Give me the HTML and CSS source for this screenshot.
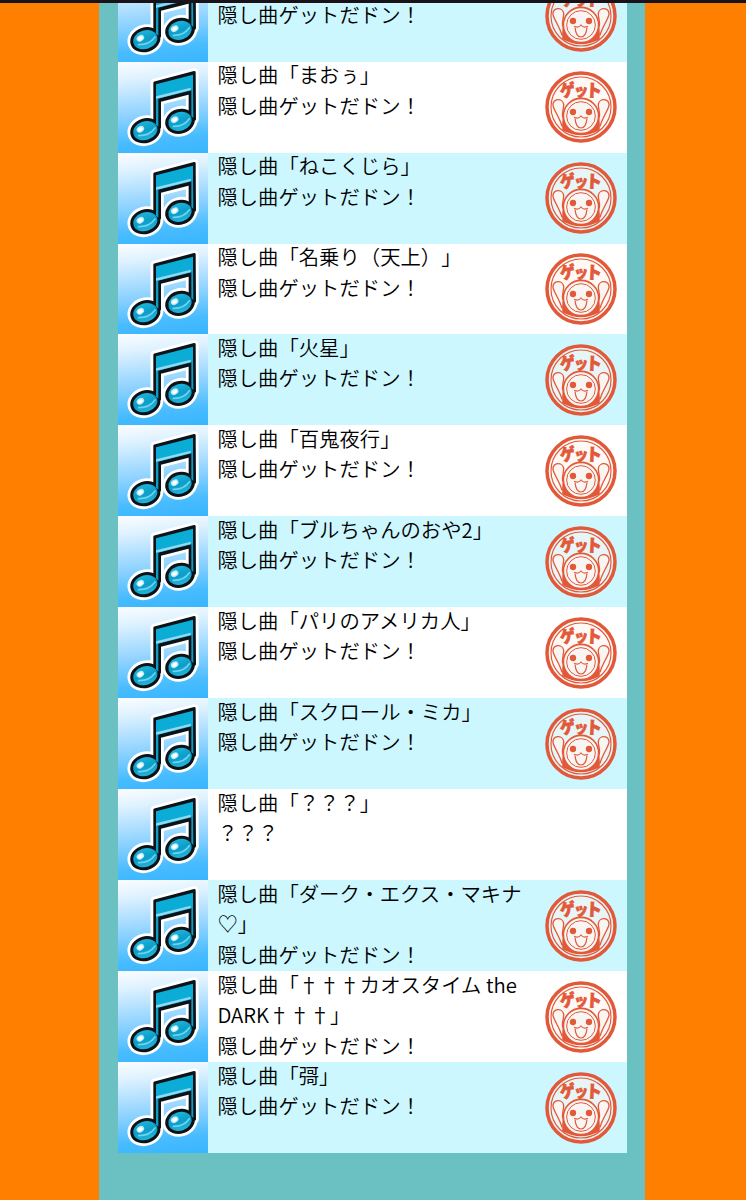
FILE: index.html
```
<!DOCTYPE html>
<html lang="ja">
<head>
  <meta charset="UTF-8" />
  <meta name="viewport" content="width=device-width, initial-scale=1.0"/>
  <title>ごほうび</title>
  <link rel="stylesheet" href="styles.css">
</head>
<body>
  <svg class="defs" width="0" height="0">
    <defs>
      <linearGradient id="noteFill" x1="0" y1="0" x2="0" y2="1">
        <stop offset="0" stop-color="#1cb4da"/>
        <stop offset="0.5" stop-color="#0c9dc8"/>
        <stop offset="1" stop-color="#22b5dc"/>
      </linearGradient>
      <g id="noteShape">
        <path d="M110 62 L229 31 L230 172 L216 172 L216 93 L125 116 L125 196 L110 196 Z"/>
        <ellipse cx="82" cy="206" rx="42" ry="33" transform="rotate(-18 82 206)"/>
        <ellipse cx="186" cy="178" rx="41" ry="33" transform="rotate(-18 186 178)"/>
      </g>
    </defs>
    <symbol id="note" viewBox="0 0 273 273">
      <use href="#noteShape" fill="#fff" stroke="#fff" stroke-width="25" stroke-linejoin="round"/>
      <use href="#noteShape" fill="#0b1218" stroke="#0b1218" stroke-width="8" stroke-linejoin="round"/>
      <path d="M114 67 L225 38 L225 84 L114 112 Z" fill="#0bacd6"/>
      <path d="M114 103 L218 77 L218 84 L114 111 Z" fill="#8fd9f1"/>
      <path d="M114 111 L121 109 L121 194 L114 188 Z M220 82 L225 81 L226 168 L220 162 Z" fill="#0d9dc5"/>
      <g fill="url(#noteFill)">
        <ellipse cx="82" cy="206" rx="37" ry="28" transform="rotate(-18 82 206)"/>
        <ellipse cx="186" cy="178" rx="36" ry="28" transform="rotate(-18 186 178)"/>
      </g>
      <g fill="none" stroke="#6fd2ee" stroke-width="5" stroke-linecap="round">
        <path d="M62 221 Q94 222 111 198"/>
        <path d="M166 193 Q198 194 214 170"/>
      </g>
      <g fill="#b5ebf9">
        <ellipse cx="67" cy="202" rx="12" ry="9" transform="rotate(-30 67 202)"/>
        <ellipse cx="170" cy="173" rx="12" ry="9" transform="rotate(-30 170 173)"/>
      </g>
      <g fill="#fff">
        <ellipse cx="67" cy="202" rx="8" ry="5.5" transform="rotate(-30 67 202)"/>
        <ellipse cx="170" cy="173" rx="8" ry="5.5" transform="rotate(-30 170 173)"/>
      </g>
    </symbol>
    <symbol id="stamp" viewBox="0 0 216 216">
      <circle cx="108" cy="108" r="102" fill="#fff4ef" fill-opacity="0.55" stroke="#e2593a" stroke-width="10.5"/>
      <circle cx="108" cy="108" r="90" fill="none" stroke="#e2593a" stroke-width="3.5"/>
      <path d="M50 132 L52 178 Q108 208 164 178 L166 132 Z" fill="#e2593a"/>
      <g fill="#f8f5f2" stroke="#e2593a" stroke-width="4">
        <path d="M51 166 C43 138 27 119 24 103 C22 82 53 80 56 100 C57 112 50 122 53 139"/>
        <path d="M165 166 C173 138 189 119 192 103 C194 82 163 80 160 100 C159 112 166 122 163 139"/>
        <circle cx="108" cy="135" r="53" stroke-width="5"/>
        <circle cx="108" cy="135" r="43" stroke-width="3"/>
      </g>
      <g fill="#e2593a">
        <circle cx="84" cy="123" r="9.5"/>
        <circle cx="132" cy="123" r="9.5"/>
      </g>
      <path d="M87 139 Q100 145 108 135 Q116 145 129 139 M90 142 Q93 171 108 171 Q123 171 126 142" fill="none" stroke="#e2593a" stroke-width="3.5"/>
      <g class="stamp-text">
        <text transform="translate(47 79) rotate(-6) scale(1.04 1.18)">ゲ</text>
        <text transform="translate(87 74) scale(1 1.1)">ッ</text>
        <text transform="translate(122 76) rotate(3) scale(1.1 1.18)">ト</text>
      </g>
    </symbol>
  </svg>

  <main class="panel">
    <ul class="rewards" id="rewards"></ul>
  </main>

  <script src="script.js"></script>
</body>
</html>
```
FILE: styles.css
```
* {
  box-sizing: border-box;
}

body {
  margin: 0;
  height: 1200px;
  overflow: hidden;
  background: #ff8000;
  border-top: 3px solid #1a1219;
  font-family: "Noto Sans CJK JP", sans-serif;
  font-weight: 400;
  color: #000;
}

.defs {
  display: block;
}

.panel {
  width: 545.5px;
  height: 1197px;
  margin-left: 99px;
  padding: 0 18px 0 19px;
  background: #6bc1c1;
  overflow: hidden;
}

.rewards {
  list-style: none;
  margin: -32.4px 0 0;
  padding: 0;
}

.reward {
  display: flex;
  height: 90.97px;
  background: #fff;
}

.reward:nth-child(odd) {
  background: #ccf7ff;
}

.icon {
  flex: none;
  width: 90.4px;
  background: linear-gradient(174deg, #fbfdff 0%, #dff2ff 18%, #8dd2ff 55%, #48bcff 82%, #38b5ff 100%);
}

.icon svg {
  display: block;
  width: 91px;
  height: 91px;
}

.text {
  width: 329px;
  padding-left: 9px;
  font-size: 20.35px;
  line-height: 30.5px;
  font-weight: 350;
  text-spacing-trim: space-all;
}

.text p {
  margin: -2.5px 0 0;
}

.dagger {
  display: inline-block;
  width: 20.35px;
  text-align: center;
}

.get {
  flex: none;
  margin: 9.5px 0 0 7.5px;
  width: 72px;
  height: 72px;
}

.stamp-text {
  font-family: "Noto Sans CJK JP", sans-serif;
  font-size: 43px;
  font-weight: 900;
  fill: #e2593a;
  stroke: #e2593a;
  stroke-width: 2;
}
```
FILE: script.js
```
const dagger = '<span class="dagger">†</span>'.repeat(3);

const titles = [
  null,
  "まおぅ",
  "ねこくじら",
  "名乗り（天上）",
  "火星",
  "百鬼夜行",
  "ブルちゃんのおや2",
  "パリのアメリカ人",
  "スクロール・ミカ",
  "？？？",
  "ダーク・エクス・マキナ<br>♡",
  dagger + "カオスタイム the<br>DARK" + dagger,
  "彁"
];

document.getElementById("rewards").innerHTML = titles.map(title => {
  const locked = title === "？？？";
  const name = title ? `隠し曲「${title}」` : "&nbsp;";
  return `<li class="reward">
    <div class="icon"><svg><use href="#note"/></svg></div>
    <div class="text">
      <p>${name}<br>${locked ? "？？？" : "隠し曲ゲットだドン！"}</p>
    </div>
    ${locked ? "" : '<svg class="get"><use href="#stamp"/></svg>'}
  </li>`;
}).join("");
```
